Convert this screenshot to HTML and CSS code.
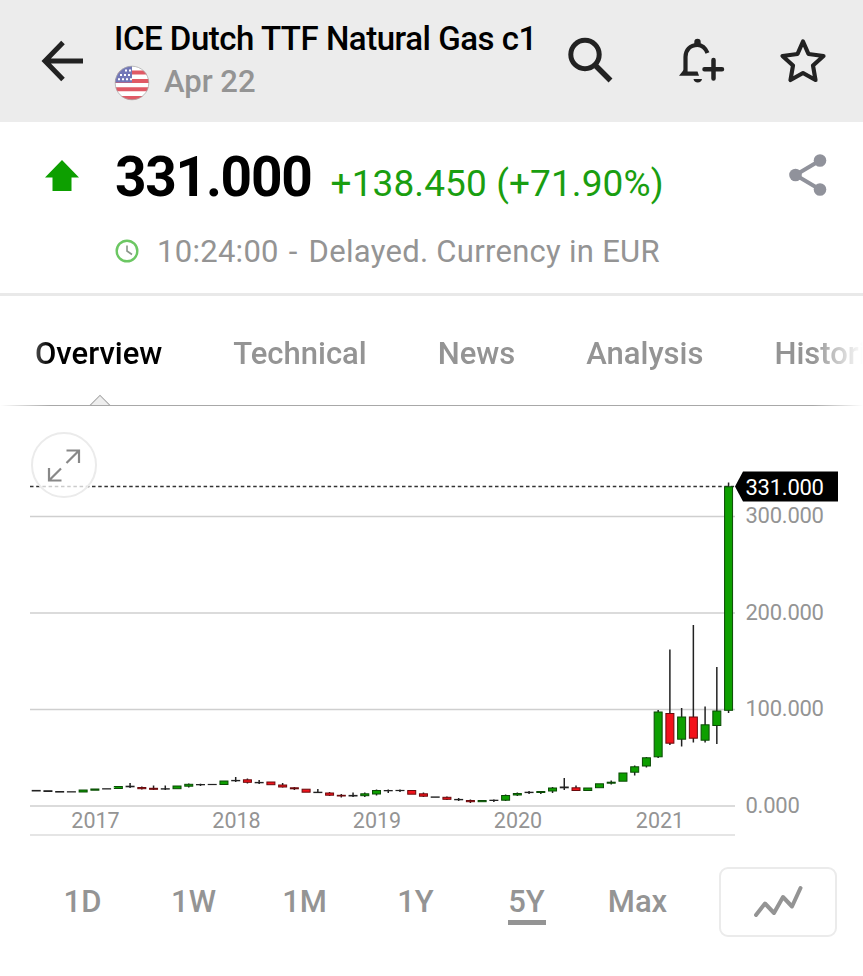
FILE: index.html
```html
<!DOCTYPE html>
<html lang="en">
  <head>
    <meta charset="UTF-8" />
    <meta name="viewport" content="width=device-width, initial-scale=1.0" />
    <title>ICE Dutch TTF Natural Gas c1</title>
    <link rel="stylesheet" href="styles.css">
  </head>
  <body>
    <header class="topbar">
      <svg class="back" width="44" height="44" viewBox="0 0 44 44">
        <path d="M43 22H5M23 3.500L5 22l18 18.500" />
      </svg>
      <div class="heading">
        <h1>ICE Dutch TTF Natural Gas c1</h1>
        <div class="contract">
          <svg class="flag" width="36" height="36" viewBox="0 0 36 36">
            <clipPath id="round"><circle cx="18" cy="18" r="17" /></clipPath>
            <g clip-path="url(#round)">
              <rect width="36" height="36" fill="#fff" />
              <path d="M0 7.500h36M0 16h36M0 24.300h36M0 33h36" stroke="#e05a66" stroke-width="4" />
              <rect width="18" height="17.500" fill="#7277b8" />
              <path d="M11 5.500h7M6 10h12M4 14.300h14" stroke="#fff" stroke-width="2" stroke-dasharray="2 2" />
            </g>
            <circle cx="18" cy="18" r="16.800" fill="none" stroke="#aaa" stroke-width=".8" />
          </svg>
          <span>Apr 22</span>
        </div>
      </div>
      <div class="actions">
        <svg width="48" height="48" viewBox="0 0 48 48">
          <circle cx="18" cy="17.500" r="14.200" stroke-width="5" />
          <path d="M29 29L43.500 43.500" stroke-width="5.500" />
        </svg>
        <svg class="bell" width="48" height="48" viewBox="0 0 48 48">
          <path d="M30.500 16C28 10 24 8 20.500 8C13 8 8.500 13 8.500 20V35" stroke-width="4.200" />
          <path d="M2 38.800L7 32.500V34.500H20.500L22 38.800Z" class="solid" />
          <path d="M17.300 8V5a3.200 3.200 0 0 1 6.400 0v3zM16.500 42h8.500a4.300 4 0 0 1-8.500 0z" class="solid" />
          <path d="M27.500 32.200H45M36.500 23V41.500" stroke-width="4.500" stroke-linecap="round" />
        </svg>
        <svg width="48" height="48" viewBox="0 0 48 48">
          <path d="M24 4.500L29.500 17L44.500 19L34 28.500L36.500 43L24 36L11.500 43L14 28.500L3.500 19L18.500 17Z" stroke-width="4.200" stroke-linejoin="round" />
        </svg>
      </div>
    </header>

    <section class="quote">
      <svg class="up" width="34" height="32" viewBox="0 0 34 32">
        <path d="M17 0L34 17.500H26.500V31H7.500V17.500H0Z" />
      </svg>
      <div class="figures">
        <div class="price-row">
          <span class="price">331.000</span>
          <span class="change">+138.450 (+71.90%)</span>
        </div>
        <div class="time-row">
          <svg width="24" height="24" viewBox="0 0 24 24">
            <circle cx="12" cy="12" r="10.300" stroke="#6cc763" />
            <path d="M12 6.500V12L17 15.500" stroke="#8a968a" stroke-width="1.600" />
          </svg>
          <span>10:24:00 <span class="dash">-</span> Delayed. Currency in EUR</span>
        </div>
      </div>
      <svg class="share" width="40" height="44" viewBox="0 0 40 44">
        <path d="M32 7.500L7.500 22L32 36.500" />
        <circle cx="32" cy="7.500" r="6.300" />
        <circle cx="7.500" cy="22" r="6.300" />
        <circle cx="32" cy="36.500" r="6.300" />
      </svg>
    </section>

    <nav class="tabs">
      <a class="active">Overview</a>
      <a>Technical</a>
      <a>News</a>
      <a>Analysis</a>
      <a>Historical Data</a>
    </nav>

    <main class="chart">
      <svg id="plot" width="863" height="440" viewBox="0 406 863 440"></svg>
      <button class="expand">
        <svg width="34" height="34" viewBox="0 0 34 34">
          <path d="M19.500 2.500H32V15M32 2.500L19.500 15M2 20V32.500H14.500M2 32.500L14 20.500" />
        </svg>
      </button>
    </main>

    <footer class="ranges">
      <div class="periods">
        <a>1D</a>
        <a>1W</a>
        <a>1M</a>
        <a>1Y</a>
        <a class="active">5Y</a>
        <a>Max</a>
      </div>
      <button class="type">
        <svg width="52" height="36" viewBox="0 0 52 36">
          <path d="M4 31L13 19.500L22 29L31 13L40 22.500L48.500 4" />
        </svg>
      </button>
    </footer>

    <script>
      const GREEN = "#0d9f00"
      const RED = "#f3121b"
      const BLACK = "#222"

      // color, body top, body bottom, wick top, wick bottom
      const candles = [
        ["k", 790.2, 791.2], ["k", 790.5, 791.7], ["k", 791.3, 792.3], ["k", 791.5, 792.2],
        ["g", 790, 792], ["g", 789, 790.2], ["k", 788.5, 789.2], ["g", 786.5, 788.5],
        ["k", 786, 787, 783, 788], ["r", 787.5, 788.7, 786.5, 789.5], ["r", 788.3, 789.3, 785.5, 790], ["k", 788.5, 789.3, 785.5, 790],
        ["g", 786, 788.7], ["g", 784.3, 786.2, 783.5, 787.5], ["k", 784.3, 785, 783.7, 786], ["k", 784.2, 784.8],
        ["g", 781, 784.5], ["k", 780.2, 781, 777, 782], ["r", 779.8, 782.3, 778.5, 783.5], ["k", 782.2, 783, 780, 784],
        ["r", 782, 784.7], ["r", 785, 787, 783, 787.5], ["r", 787.8, 788.8, 787, 790], ["r", 789.2, 792.2],
        ["k", 792, 792.8, 789, 793], ["r", 793, 795.2, 792, 796], ["r", 795.3, 796, 794, 797.5], ["k", 795.2, 796.2, 792.5, 797],
        ["g", 793.8, 795.7, 792.5, 797], ["g", 790.5, 794, 789.5, 795.5], ["k", 790.3, 791, 789.5, 793], ["k", 790.2, 790.8, 789.5, 792],
        ["r", 790.5, 794.2], ["r", 793.8, 796.2, 792.5, 797], ["k", 796.7, 797.5], ["r", 797.3, 799.3, 796.5, 800],
        ["k", 799.2, 800, 798, 801], ["r", 800.5, 801.7, 799.5, 803], ["g", 800.5, 801.7], ["k", 800, 800.7, 799.5, 802],
        ["g", 795.5, 800.2, 794.5, 801], ["g", 793.5, 795, 792.5, 796], ["k", 792, 792.8, 791, 794], ["g", 791.5, 792.5, 791, 794],
        ["g", 788, 791, 787, 793], ["k", 786.8, 788, 778, 790], ["r", 787.8, 790.5, 785.5, 791], ["g", 788, 790.5],
        ["g", 783.8, 787.7], ["g", 782.2, 783.2, 780.5, 784.5], ["g", 773, 781.2], ["g", 766.8, 772.2, 765.5, 775.5],
        ["g", 757.8, 766, 757, 767.5], ["g", 712, 756.8, 710, 758], ["r", 713.5, 743.2, 649.5, 745], ["g", 717, 739.2, 708, 746.5],
        ["r", 717, 738.2, 625, 742.5], ["g", 724.8, 740.2, 706.5, 742.5], ["g", 711, 725.5, 667, 744], ["g", 486.8, 710.3, 482.5, 713]
      ]

      const plot = document.querySelector("#plot")
      let out = ""

      // grid and price labels
      const levels = [["300.000", 516.5], ["200.000", 613], ["100.000", 709.5], ["0.000", 806]]
      levels.forEach(([label, y]) => {
        out += `<path class="grid" d="M30 ${y}H735" />`
        out += `<text class="price-label" x="745.500" y="${y + 6.5}">${label}</text>`
      })
      out += `<path class="grid base" d="M30 835H735" />`

      const years = [["2017", 95.5], ["2018", 236.5], ["2019", 377], ["2020", 518], ["2021", 660]]
      years.forEach(([label, x]) => {
        out += `<text class="year" x="${x}" y="828">${label}</text>`
      })

      out += `<path class="last" d="M30 486.500H735" />`

      candles.forEach(([type, top, bottom, high, low], i) => {
        const x = 36.2 + i * 11.735
        const fill = type === "g" ? GREEN : type === "r" ? RED : BLACK
        if (high) {
          out += `<path class="wick" d="M${x} ${high}V${low}" />`
        }
        if (type === "k") {
          out += `<rect x="${x - 4.5}" y="${top - 0.3}" width="9" height="${bottom - top + 0.6}" fill="${fill}" />`
        } else {
          out += `<rect class="candle ${type}" x="${x - 4}" y="${top}" width="8" height="${bottom - top}" fill="${fill}" />`
        }
      })

      out += `<path d="M735 486.500L743 471.500H838V501.500H743Z" />`
      out += `<text class="price-label now" x="745.500" y="495">331.000</text>`
      plot.innerHTML = out
    </script>
  </body>
</html>
```
FILE: styles.css
```css
body {
  margin: 0;
  background-color: #fff;
  color: #949494;
  font-family: Roboto, "Liberation Sans", sans-serif;
  overflow: hidden;
}

svg {
  display: block;
  flex: none;
}

button {
  padding: 0;
  background: none;
}

.topbar {
  box-sizing: border-box;
  display: flex;
  height: 122px;
  padding: 16px 36px 0 40px;
  background-color: #ececec;
}

.back {
  margin-top: 23px;
  fill: none;
  stroke: #222;
  stroke-width: 5;
}

.heading {
  width: 453px;
  margin-left: 30px;
}

h1 {
  height: 44px;
  margin: 0;
  color: #000;
  font-size: 33px;
  font-weight: 500;
  letter-spacing: -0.47px;
  line-height: 46px;
  white-space: nowrap;
}

.contract {
  display: flex;
  align-items: center;
  gap: 14px;
  height: 42px;
  font-size: 31px;
  font-weight: 500;
}

.flag {
  margin-top: 4px;
}

.actions {
  display: flex;
  justify-content: space-between;
  flex: 1;
  padding-top: 21px;
  fill: none;
  stroke: #222;
}

.bell {
  margin-left: 8px;
}

.solid {
  fill: #222;
  stroke: none;
}

.quote {
  box-sizing: border-box;
  display: flex;
  height: 174px;
  padding: 32px 35px 0 45px;
  border-bottom: 3px solid #e9e9e9;
}

.up {
  margin-top: 6px;
  fill: #0d9f00;
}

.figures {
  flex: 1;
  padding-left: 36px;
  white-space: nowrap;
}

.price-row {
  display: flex;
  align-items: baseline;
  gap: 19px;
  height: 44px;
  line-height: 46px;
}

.price {
  color: #000;
  font-size: 55px;
  font-weight: 700;
  letter-spacing: -1.25px;
}

.change {
  color: #1a9e10;
  font-size: 37px;
  letter-spacing: 0.1px;
}

.time-row {
  display: flex;
  align-items: center;
  gap: 18px;
  height: 42px;
  margin-top: 32px;
  font-size: 31px;
  letter-spacing: 0.28px;
}

.dash {
  padding: 0 3px 0 2px;
}

.time-row svg {
  fill: none;
  stroke-width: 2.4;
}

.share {
  margin-top: -1px;
  fill: #90929b;
}

.share path {
  fill: none;
  stroke: #90929b;
  stroke-width: 4;
}

.tabs {
  box-sizing: border-box;
  display: flex;
  gap: 71px;
  height: 110px;
  padding-left: 35px;
  border-bottom: 1px solid #a8a8a8;
  font-size: 31px;
  font-weight: 500;
  line-height: 116px;
  white-space: nowrap;
  overflow: hidden;
  -webkit-mask-image: linear-gradient(to right, transparent, #000 50px, #000 813px, transparent);
  mask-image: linear-gradient(to right, transparent, #000 50px, #000 813px, transparent);
}

.tabs a {
  position: relative;
}

.tabs .active {
  color: #000;
}

/* little notch under the open tab */
.tabs .active::after {
  content: "";
  position: absolute;
  left: 57px;
  top: 102px;
  width: 14px;
  height: 14px;
  border: 1px solid #a8a8a8;
  background-color: #eee;
  transform: rotate(45deg);
}

.chart {
  position: relative;
  height: 440px;
}

.grid {
  stroke: #cfcfcf;
  stroke-width: 1.5;
}

.base {
  stroke: #dcdcdc;
}

.last {
  stroke: #333;
  stroke-width: 1.5;
  stroke-dasharray: 3.5 2.7;
}

.wick {
  stroke: #222;
  stroke-width: 1.5;
}

.candle {
  stroke-width: 1;
}

.g {
  stroke: #0a4a05;
}

.r {
  stroke: #6a0a0d;
}

.price-label,
.year {
  fill: #949494;
  font-size: 22px;
}

.price-label {
  letter-spacing: -0.25px;
}

.year {
  font-size: 21.5px;
  text-anchor: middle;
}

.price-label.now {
  fill: #fff;
}

.expand {
  position: absolute;
  left: 31px;
  top: 26px;
  display: flex;
  align-items: center;
  justify-content: center;
  width: 66px;
  height: 66px;
  border: 2px solid #ebebeb;
  border-radius: 50%;
  background-color: rgba(255, 255, 255, 0.75);
}

.expand svg {
  fill: none;
  stroke: #888;
  stroke-width: 2.2;
}

.ranges {
  display: flex;
  padding: 21px 26px 0 27px;
}

.periods {
  display: flex;
  width: 692px;
  font-size: 31px;
  font-weight: 500;
  line-height: 69px;
}

.periods a {
  position: relative;
  flex: none;
  width: 111px;
  text-align: center;
}

.periods .active::after {
  content: "";
  position: absolute;
  left: 37px;
  top: 53px;
  width: 38px;
  height: 5px;
  background-color: #949494;
}

.type {
  display: flex;
  align-items: center;
  justify-content: center;
  width: 118px;
  height: 70px;
  border: 2px solid #ebebeb;
  border-radius: 9px;
}

.type svg {
  fill: none;
  stroke: #949494;
  stroke-width: 4;
  stroke-linecap: round;
  stroke-linejoin: round;
}
```
